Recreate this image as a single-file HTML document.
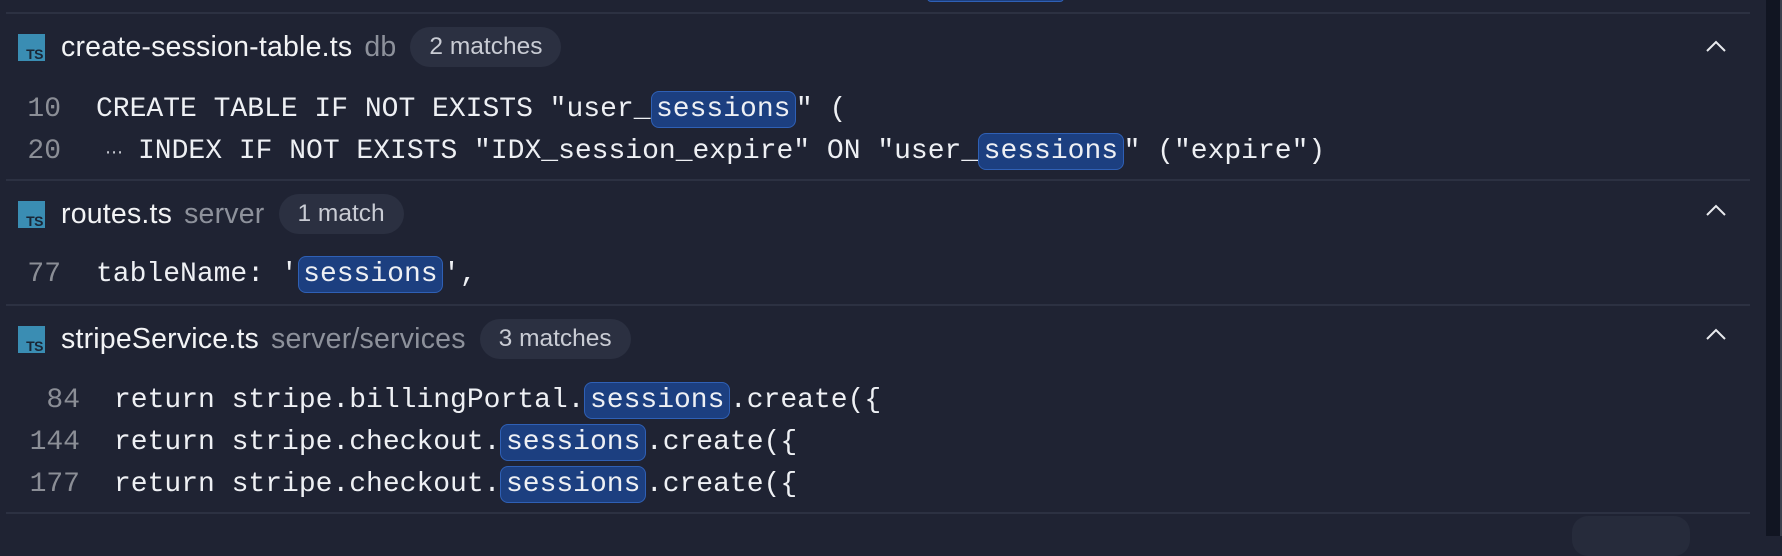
<!DOCTYPE html>
<html><head><meta charset="utf-8"><style>
*{margin:0;padding:0;box-sizing:border-box}
body{width:1782px;height:536px;background:#1f2333;position:relative;overflow:hidden;font-family:"Liberation Sans",sans-serif}
.div{position:absolute;left:6px;width:1744px;height:2px;background:#2c3142}
.hdr{position:absolute;left:18px;height:40px;display:flex;align-items:center;white-space:nowrap}
.ts{width:27px;height:27px;background:#3a8db3;position:relative;margin-right:16px;flex:none}
.ts span{position:absolute;right:2px;bottom:0px;font:bold 14px/14px "Liberation Sans",sans-serif;color:#1a2636;letter-spacing:-0.5px}
.name{font-size:28.5px;color:#f2f3f5;letter-spacing:0.2px}
.dir{font-size:28.5px;color:#8d919b;margin-left:12px;letter-spacing:0.2px}
.pill{margin-left:14px;height:40px;border-radius:20px;background:#2b3041;color:#c9ccd4;font-size:24.5px;padding:0 19px;display:flex;align-items:center}
.line{position:absolute;height:42px;line-height:42px;font-family:"Liberation Mono",monospace;font-size:28px;color:#eef0f4;white-space:pre}
.num{position:absolute;text-align:right;color:#8b8e96}
.hl{display:inline-block;background:#1c3f80;border:1.5px solid #2f60b5;border-radius:8px;padding:0 4.5px;line-height:35px}
.chev{position:absolute;left:1705px}
</style></head><body>
<div style="position:absolute;left:927px;top:-6px;width:137px;height:8px;background:#1c3f80;border:1.5px solid #2f60b5;border-radius:6px"></div>
<div class="div" style="top:12px"></div>
<div class="div" style="top:179px"></div>
<div class="div" style="top:304px"></div>
<div class="div" style="top:512px"></div>
<div style="position:absolute;left:1766px;top:0;width:14px;height:536px;background:#111522"></div>
<div style="position:absolute;left:1780px;top:0;width:2px;height:536px;background:#3b404d"></div>
<div style="position:absolute;left:1572px;top:516px;width:118px;height:40px;border-radius:16px;background:#262b3b"></div>

<!-- section 1 -->
<div class="hdr" style="top:27px"><div class="ts"><span>TS</span></div><span class="name">create-session-table.ts</span><span class="dir">db</span><span class="pill">2 matches</span></div>
<svg class="chev" style="top:40px" width="22" height="14"><polyline points="2,11 11,2 20,11" fill="none" stroke="#e8eaee" stroke-width="2"/></svg>
<div class="line num" style="left:0;width:61px;top:89px">10</div>
<div class="line" style="left:96px;top:89px">CREATE TABLE IF NOT EXISTS "user_<span class="hl">sessions</span>" (</div>
<div class="line num" style="left:0;width:61px;top:131px">20</div>
<div class="line" style="left:96px;top:131px"><span style="display:inline-block;width:42px;font-family:'DejaVu Sans',sans-serif;font-size:18px;color:#c9ccd4;padding-left:9px">⋯</span>INDEX IF NOT EXISTS "IDX_session_expire" ON "user_<span class="hl">sessions</span>" ("expire")</div>

<!-- section 2 -->
<div class="hdr" style="top:194px"><div class="ts"><span>TS</span></div><span class="name">routes.ts</span><span class="dir">server</span><span class="pill">1 match</span></div>
<svg class="chev" style="top:204px" width="22" height="14"><polyline points="2,11 11,2 20,11" fill="none" stroke="#e8eaee" stroke-width="2"/></svg>
<div class="line num" style="left:0;width:61px;top:254px">77</div>
<div class="line" style="left:96px;top:254px">tableName: '<span class="hl">sessions</span>',</div>

<!-- section 3 -->
<div class="hdr" style="top:319px"><div class="ts"><span>TS</span></div><span class="name">stripeService.ts</span><span class="dir">server/services</span><span class="pill">3 matches</span></div>
<svg class="chev" style="top:328px" width="22" height="14"><polyline points="2,11 11,2 20,11" fill="none" stroke="#e8eaee" stroke-width="2"/></svg>
<div class="line num" style="left:0;width:80px;top:380px">84</div>
<div class="line" style="left:114px;top:380px">return stripe.billingPortal.<span class="hl">sessions</span>.create({</div>
<div class="line num" style="left:0;width:80px;top:422px">144</div>
<div class="line" style="left:114px;top:422px">return stripe.checkout.<span class="hl">sessions</span>.create({</div>
<div class="line num" style="left:0;width:80px;top:464px">177</div>
<div class="line" style="left:114px;top:464px">return stripe.checkout.<span class="hl">sessions</span>.create({</div>
</body></html>
